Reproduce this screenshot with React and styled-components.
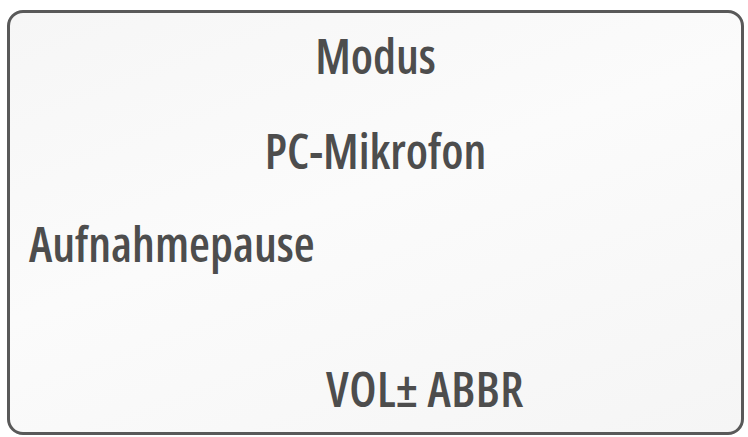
import React from "react";
import styled, { createGlobalStyle } from "styled-components";

const Global = createGlobalStyle`
  html, body { margin: 0; padding: 0; background: #ffffff; }
  * { box-sizing: border-box; }
`;

const Page = styled.div`
  width: 748px;
  height: 437px;
  padding: 10px 4px 2px 7px;
  background: #ffffff;
`;

const Screen = styled.div`
  height: 100%;
  display: flex;
  flex-direction: column;
  border: 3px solid #595959;
  border-radius: 16px;
  background: linear-gradient(160deg, #f6f6f6 0%, #fbfbfb 45%, #f5f5f5 100%);
  padding: 20px 0 20px;
  font-family: "Open Sans", "Noto Sans", sans-serif;
  font-stretch: 78%;
  font-weight: 650;
  color: #4d4d4d;
`;

const Label = styled.div`
  font-size: 48px;
  line-height: 46px;
  white-space: nowrap;
  text-align: ${(p) => p.$align || "center"};
  margin-top: ${(p) => p.$gap || 0}px;
  padding-left: ${(p) => p.$indent || 0}px;
`;

const Footer = styled(Label)`
  margin-top: auto;
  letter-spacing: 0.5px;
`;

export default function App() {
  return (
    <>
      <Global />
      <Page>
        <Screen>
          <Label>Modus</Label>
          <Label $gap={49}>PC-Mikrofon</Label>
          <Label $gap={47} $align="left" $indent={19}>
            Aufnahmepause
          </Label>
          <Footer $align="left" $indent={316}>
            VOL± ABBR
          </Footer>
        </Screen>
      </Page>
    </>
  );
}
